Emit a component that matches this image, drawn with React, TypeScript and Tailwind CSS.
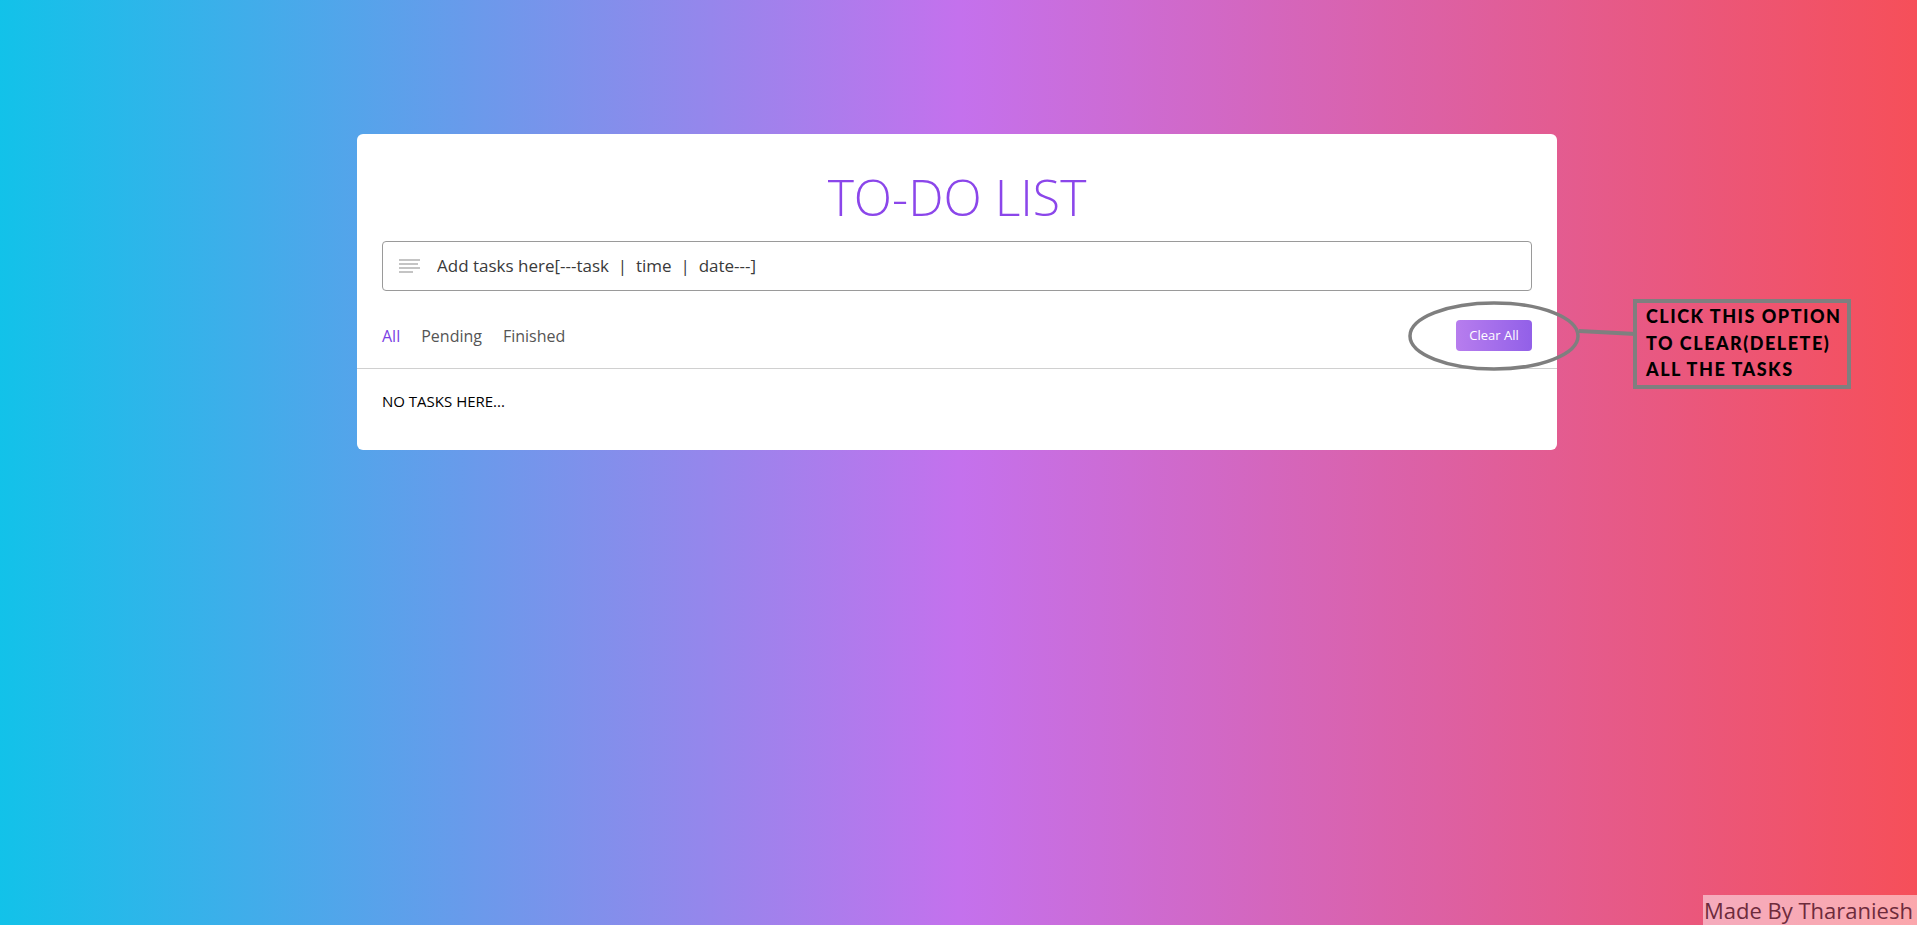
import { useState } from "react";

const tabs = ["All", "Pending", "Finished"];

const NotesIcon = () => (
    <svg width="22" height="16" viewBox="0 0 22 16" className="shrink-0">
        <rect x="0" y="1" width="21" height="2" fill="#c4c4c4" />
        <rect x="0" y="5" width="19" height="2" fill="#c4c4c4" />
        <rect x="0" y="9" width="21" height="2" fill="#c4c4c4" />
        <rect x="0" y="13" width="14" height="2" fill="#c4c4c4" />
    </svg>
);

const App = () => {
    const [active, setActive] = useState("All");
    const [task, setTask] = useState("");

    return (
        <div className="relative min-h-screen w-full overflow-hidden bg-[linear-gradient(to_right,#12c2e9,#c471ed,#f64f59)] font-['Open_Sans',sans-serif]">
            <div className="pl-[357px] pt-[134px]">
                <div className="w-[1200px] rounded-[6px] bg-white">
                    <h1 className="pt-[38px] text-center text-[50px] font-light leading-[50px] text-[#8b46ea]">
                        TO-DO LIST
                    </h1>

                    <div className="mt-[19px] px-[25px]">
                        <div className="flex h-[50px] items-center gap-[16px] rounded-[4px] border border-[#9a9a9a] pl-[16px] pr-3">
                            <NotesIcon />
                            <input
                                className="w-full bg-transparent text-[17px] text-[#333] outline-none placeholder:text-[#3a3a3a]"
                                type="text"
                                placeholder="Add tasks here[---task  |  time  |  date---]"
                                value={task}
                                onChange={(e) => setTask(e.target.value)}
                            />
                        </div>
                    </div>

                    <div className="mt-[29px] flex h-[31px] items-center justify-between px-[25px]">
                        <div className="flex items-center gap-[21px] text-[16px]">
                            {tabs.map((t) => (
                                <button
                                    key={t}
                                    onClick={() => setActive(t)}
                                    className={active === t ? "text-[#7b3fe4]" : "text-[#555]"}
                                >
                                    {t}
                                </button>
                            ))}
                        </div>
                        <button className="h-[31px] w-[76px] rounded-[4px] bg-[linear-gradient(to_right,#b77dee,#9260e8)] text-[13px] text-white">
                            Clear All
                        </button>
                    </div>

                    <div className="mt-[17px] border-t border-[#d0d0d0]" />

                    <p className="px-[25px] pb-[37px] pt-[20px] text-[15px] leading-[24px] text-black">
                        NO TASKS HERE...
                    </p>
                </div>
            </div>

            {/* annotation: ellipse round the button + connector */}
            <svg
                className="pointer-events-none absolute left-[1404px] top-[298px]"
                width="232"
                height="78"
                viewBox="0 0 232 78"
            >
                <ellipse cx="90" cy="38" rx="84" ry="33" fill="none" stroke="#7f7f7f" strokeWidth="3.5" />
                <path d="M175 33 L232 36" stroke="#7f7f7f" strokeWidth="4" />
            </svg>

            <div className="absolute left-[1633px] top-[299px] h-[90px] w-[218px] whitespace-nowrap border-4 border-[#7f7f7f] pl-[9px] font-['Lato',sans-serif] text-[18px] font-black leading-[26.5px] tracking-[1.5px] text-black">
                CLICK THIS OPTION
                <br />
                TO CLEAR(DELETE)
                <br />
                ALL THE TASKS
            </div>

            <div className="absolute bottom-0 right-0 h-[30px] w-[214px] whitespace-nowrap bg-white/50 pl-[1px] text-[22px] leading-[30px] text-[#6e2b3c]">
                Made By Tharaniesh
            </div>
        </div>
    );
};

export default App;
